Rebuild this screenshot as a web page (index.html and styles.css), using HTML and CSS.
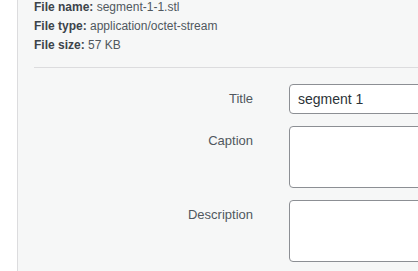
FILE: index.html
```html
<!DOCTYPE html>
<html lang="en">
<head>
  <meta charset="UTF-8" />
  <meta name="viewport" content="width=device-width, initial-scale=1.0"/>
  <title>Attachment Details</title>
  <link rel="stylesheet" href="styles.css">
</head>
<body>

  <div class="sidebar">
    <div class="details">
      <div><strong>File name:</strong> segment-1-1.stl</div>
      <div><strong>File type:</strong> application/octet-stream</div>
      <div><strong>File size:</strong> 57 KB</div>
    </div>

    <div class="settings">
      <label class="setting-label" for="title">Title</label>
      <input class="field" id="title" type="text" value="segment 1">

      <label class="setting-label" for="caption">Caption</label>
      <textarea class="field area" id="caption"></textarea>

      <label class="setting-label" for="description">Description</label>
      <textarea class="field area" id="description"></textarea>
    </div>
  </div>

</body>
</html>
```

FILE: styles.css
```css
html, body {
  margin: 0;
  height: 100%;
  overflow: hidden;
  background: #fff;
}

body {
  padding-left: 17px;
  font-family: "Liberation Sans", Arial, sans-serif;
}

.sidebar {
  height: 100%;
  background: #f6f7f7;
  border-left: 1px solid #dcdcde;
  padding-left: 16px;
  overflow: hidden;
}

.details {
  margin-top: -2px;
  padding-bottom: 12px;
  font-size: 12px;
  line-height: 19px;
  color: #50575e;
  border-bottom: 1px solid #dcdcde;
}

.details strong {
  font-weight: bold;
  color: #3c434a;
}

.settings {
  display: grid;
  grid-template-columns: 219px 1fr;
  column-gap: 36px;
  row-gap: 12px;
  padding-top: 16px;
  margin-right: -20px;
}

.setting-label {
  text-align: right;
  font-size: 13px;
  line-height: 30px;
  color: #50575e;
}

.field {
  box-sizing: border-box;
  width: 100%;
  height: 30px;
  margin: 0;
  padding: 0 8px;
  border: 1px solid #8c8f94;
  border-radius: 4px;
  background: #fff;
  font-family: "Liberation Sans", Arial, sans-serif;
  font-size: 14px;
  color: #2c3338;
}

.area {
  height: 62px;
  resize: none;
}
```
